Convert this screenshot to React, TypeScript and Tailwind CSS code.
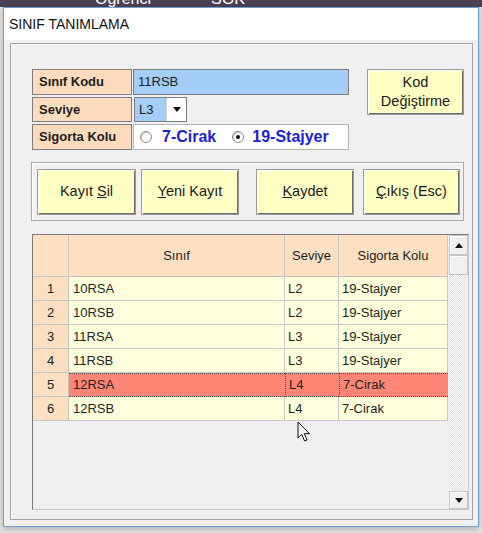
const rows = [
  { n: 1, sinif: "10RSA", seviye: "L2", kol: "19-Stajyer" },
  { n: 2, sinif: "10RSB", seviye: "L2", kol: "19-Stajyer" },
  { n: 3, sinif: "11RSA", seviye: "L3", kol: "19-Stajyer" },
  { n: 4, sinif: "11RSB", seviye: "L3", kol: "19-Stajyer" },
  { n: 5, sinif: "12RSA", seviye: "L4", kol: "7-Cirak", selected: true },
  { n: 6, sinif: "12RSB", seviye: "L4", kol: "7-Cirak" },
]

const btn =
  "flex items-center justify-center h-[46px] bg-[#ffffc4] border border-[#9a9a9a] shadow-[inset_1px_1px_0_#ffffff,inset_-1px_-1px_0_#6e6e6e] text-[14.5px] text-[#1a1a1a]"

function Label({ children }: { children: React.ReactNode }) {
  return (
    <div className="flex items-center w-[100px] h-full bg-[#fcdcbc] border border-[#7d7d7d] pl-[6px] text-[13px] font-bold text-[#1c1c1c]">
      {children}
    </div>
  )
}

function Radio({ checked }: { checked?: boolean }) {
  return (
    <span className="flex items-center justify-center size-[12px] rounded-full border border-[#8a8a8a] bg-white shadow-[inset_1px_1px_0_#c8c8c8]">
      {checked && <span className="size-[4px] rounded-full bg-[#111]" />}
    </span>
  )
}

function Cursor() {
  return (
    <svg className="absolute left-[297px] top-[421px]" width="14" height="22" viewBox="0 0 14 22">
      <path
        d="M1 1 L1 17 L4.8 13.4 L7.6 20 L10 19 L7.3 12.6 L12.4 12.6 Z"
        fill="#fff"
        stroke="#111"
        strokeWidth="1"
        strokeLinejoin="round"
      />
    </svg>
  )
}

export default function App() {
  return (
    <div className="relative w-[482px] h-[533px] overflow-hidden bg-[#e4e4e4] font-['Liberation_Sans',Arial,sans-serif]">
      <div className="h-[7px] overflow-hidden bg-[#4b4152] text-white text-[16px] leading-none">
        <div className="flex mt-[-9px]">
          <span className="ml-[95px]">Öğrenci</span>
          <span className="ml-[60px]">SGK</span>
        </div>
      </div>

      <div className="ml-[3px] w-[476px] h-[520px] border border-[#6a9fd0] bg-white shadow-[0_2px_6px_rgba(0,0,0,0.25)]">
        <div className="h-[32px] flex items-center pl-[5px] text-[14px] text-[#111]">SINIF TANIMLAMA</div>

        <div className="h-[486px] bg-[#f0f0f0] pt-[3px] pl-[6px]">
          <div className="w-[463px] h-[477px] border border-[#a3a3a3] shadow-[inset_1px_1px_0_#ffffff]">
            <div className="flex mt-[25px] ml-[21px]">
              <div className="flex flex-col gap-[2px] w-[317px]">
                <div className="flex h-[26px]">
                  <Label>Sınıf Kodu</Label>
                  <div className="ml-[1px] w-[216px] h-full flex items-center pl-[4px] bg-[#a3cdf6] border border-[#7d7d7d] text-[13px] text-[#1a1a1a]">
                    11RSB
                  </div>
                </div>
                <div className="flex h-[25px]">
                  <Label>Seviye</Label>
                  <div className="ml-[2px] w-[53px] h-full flex border border-[#7d7d7d] bg-white">
                    <div className="w-[31px] flex items-center pl-[4px] bg-[#a3cdf6] text-[13px] text-[#1a1a1a]">L3</div>
                    <div className="flex-1 flex items-center justify-center border-l border-[#d0d0d0]">
                      <svg width="8" height="5" viewBox="0 0 8 5">
                        <path d="M0 0 H8 L4 5 Z" fill="#111" />
                      </svg>
                    </div>
                  </div>
                </div>
                <div className="flex h-[26px]">
                  <Label>Sigorta Kolu</Label>
                  <div className="ml-[1px] w-[216px] h-full flex items-center border border-[#b4b4b4] bg-white pl-[6px] text-[16px] font-bold text-[#1c22d8]">
                    <Radio />
                    <span className="ml-[10px]">7-Cirak</span>
                    <span className="ml-[16px]">
                      <Radio checked />
                    </span>
                    <span className="ml-[8px]">19-Stajyer</span>
                  </div>
                </div>
              </div>

              <div className={`${btn} ml-[18px] w-[97px] h-[45px] flex-col leading-[19px]`}>
                <span>Kod</span>
                <span>Değiştirme</span>
              </div>
            </div>

            <div className="mt-[12px] ml-[20px] w-[433px] h-[59px] border border-[#a8a8a8] shadow-[inset_1px_1px_0_#ffffff] flex pt-[6px] pl-[5px]">
              <div className={`${btn} w-[99px]`}>
                <span>
                  Kayıt <u>S</u>il
                </span>
              </div>
              <div className={`${btn} w-[98px] ml-[5px]`}>
                <span>
                  <u>Y</u>eni Kayıt
                </span>
              </div>
              <div className={`${btn} w-[98px] ml-[17px]`}>
                <span>
                  <u>K</u>aydet
                </span>
              </div>
              <div className={`${btn} w-[97px] ml-[9px]`}>
                <span>
                  <u>Ç</u>ıkış (Esc)
                </span>
              </div>
            </div>

            <div className="mt-[13px] ml-[21px] w-[437px] h-[276px] flex border border-[#7a7a7a] border-r-[#c8c8c8] border-b-[#c8c8c8] text-[13px] text-[#1e1e1e]">
              <div className="w-[415px] flex flex-col">
                <div className="grid grid-cols-[36px_216px_54px_109px] h-[42px] bg-[#fddfc2]">
                  <div className="border-r border-b border-[#c4c4c4]" />
                  <div className="flex items-center justify-center border-r border-b border-[#c4c4c4]">Sınıf</div>
                  <div className="flex items-center justify-center border-r border-b border-[#c4c4c4]">Seviye</div>
                  <div className="flex items-center justify-center border-r border-b border-[#c4c4c4]">Sigorta Kolu</div>
                </div>
                {rows.map((r) => (
                  <div key={r.n} className="grid grid-cols-[36px_216px_54px_109px] h-[24px]">
                    <div className="flex items-center justify-center bg-[#fddfc2] border-r border-b border-[#c4c4c4]">{r.n}</div>
                    {r.selected ? (
                      <>
                        <div className="flex items-center pl-[4px] bg-[#ff8575] border-y border-dotted border-[#555]">{r.sinif}</div>
                        <div className="flex items-center pl-[3px] bg-[#ff8575] border-y border-l border-dotted border-[#555]">{r.seviye}</div>
                        <div className="flex items-center pl-[3px] bg-[#ff8575] border-y border-l border-dotted border-[#555]">{r.kol}</div>
                      </>
                    ) : (
                      <>
                        <div className="flex items-center pl-[4px] bg-[#ffffdc] border-r border-b border-[#c8c8c8]">{r.sinif}</div>
                        <div className="flex items-center pl-[3px] bg-[#ffffdc] border-r border-b border-[#c8c8c8]">{r.seviye}</div>
                        <div className="flex items-center pl-[3px] bg-[#ffffdc] border-r border-b border-[#c8c8c8]">{r.kol}</div>
                      </>
                    )}
                  </div>
                ))}
                <div className="flex-1 bg-[#f0f0f0]" />
              </div>

              <div className="w-[20px] flex flex-col ml-[1px]">
                <div className="h-[20px] flex items-center justify-center bg-[#f0f0f0] border border-[#c4c4c4] shadow-[inset_1px_1px_0_#ffffff]">
                  <svg width="8" height="5" viewBox="0 0 8 5">
                    <path d="M0 5 H8 L4 0 Z" fill="#111" />
                  </svg>
                </div>
                <div className="h-[20px] bg-[#f0f0f0] border border-[#c4c4c4] shadow-[inset_1px_1px_0_#ffffff]" />
                <div className="flex-1 bg-[repeating-conic-gradient(#e2e2e2_0_25%,#f8f8f8_0_50%)] bg-[length:2px_2px]" />
                <div className="h-[18px] flex items-center justify-center bg-[#f0f0f0] border border-[#c4c4c4] shadow-[inset_1px_1px_0_#ffffff]">
                  <svg width="8" height="5" viewBox="0 0 8 5">
                    <path d="M0 0 H8 L4 5 Z" fill="#111" />
                  </svg>
                </div>
              </div>
            </div>
          </div>
        </div>
      </div>

      <Cursor />
    </div>
  )
}
